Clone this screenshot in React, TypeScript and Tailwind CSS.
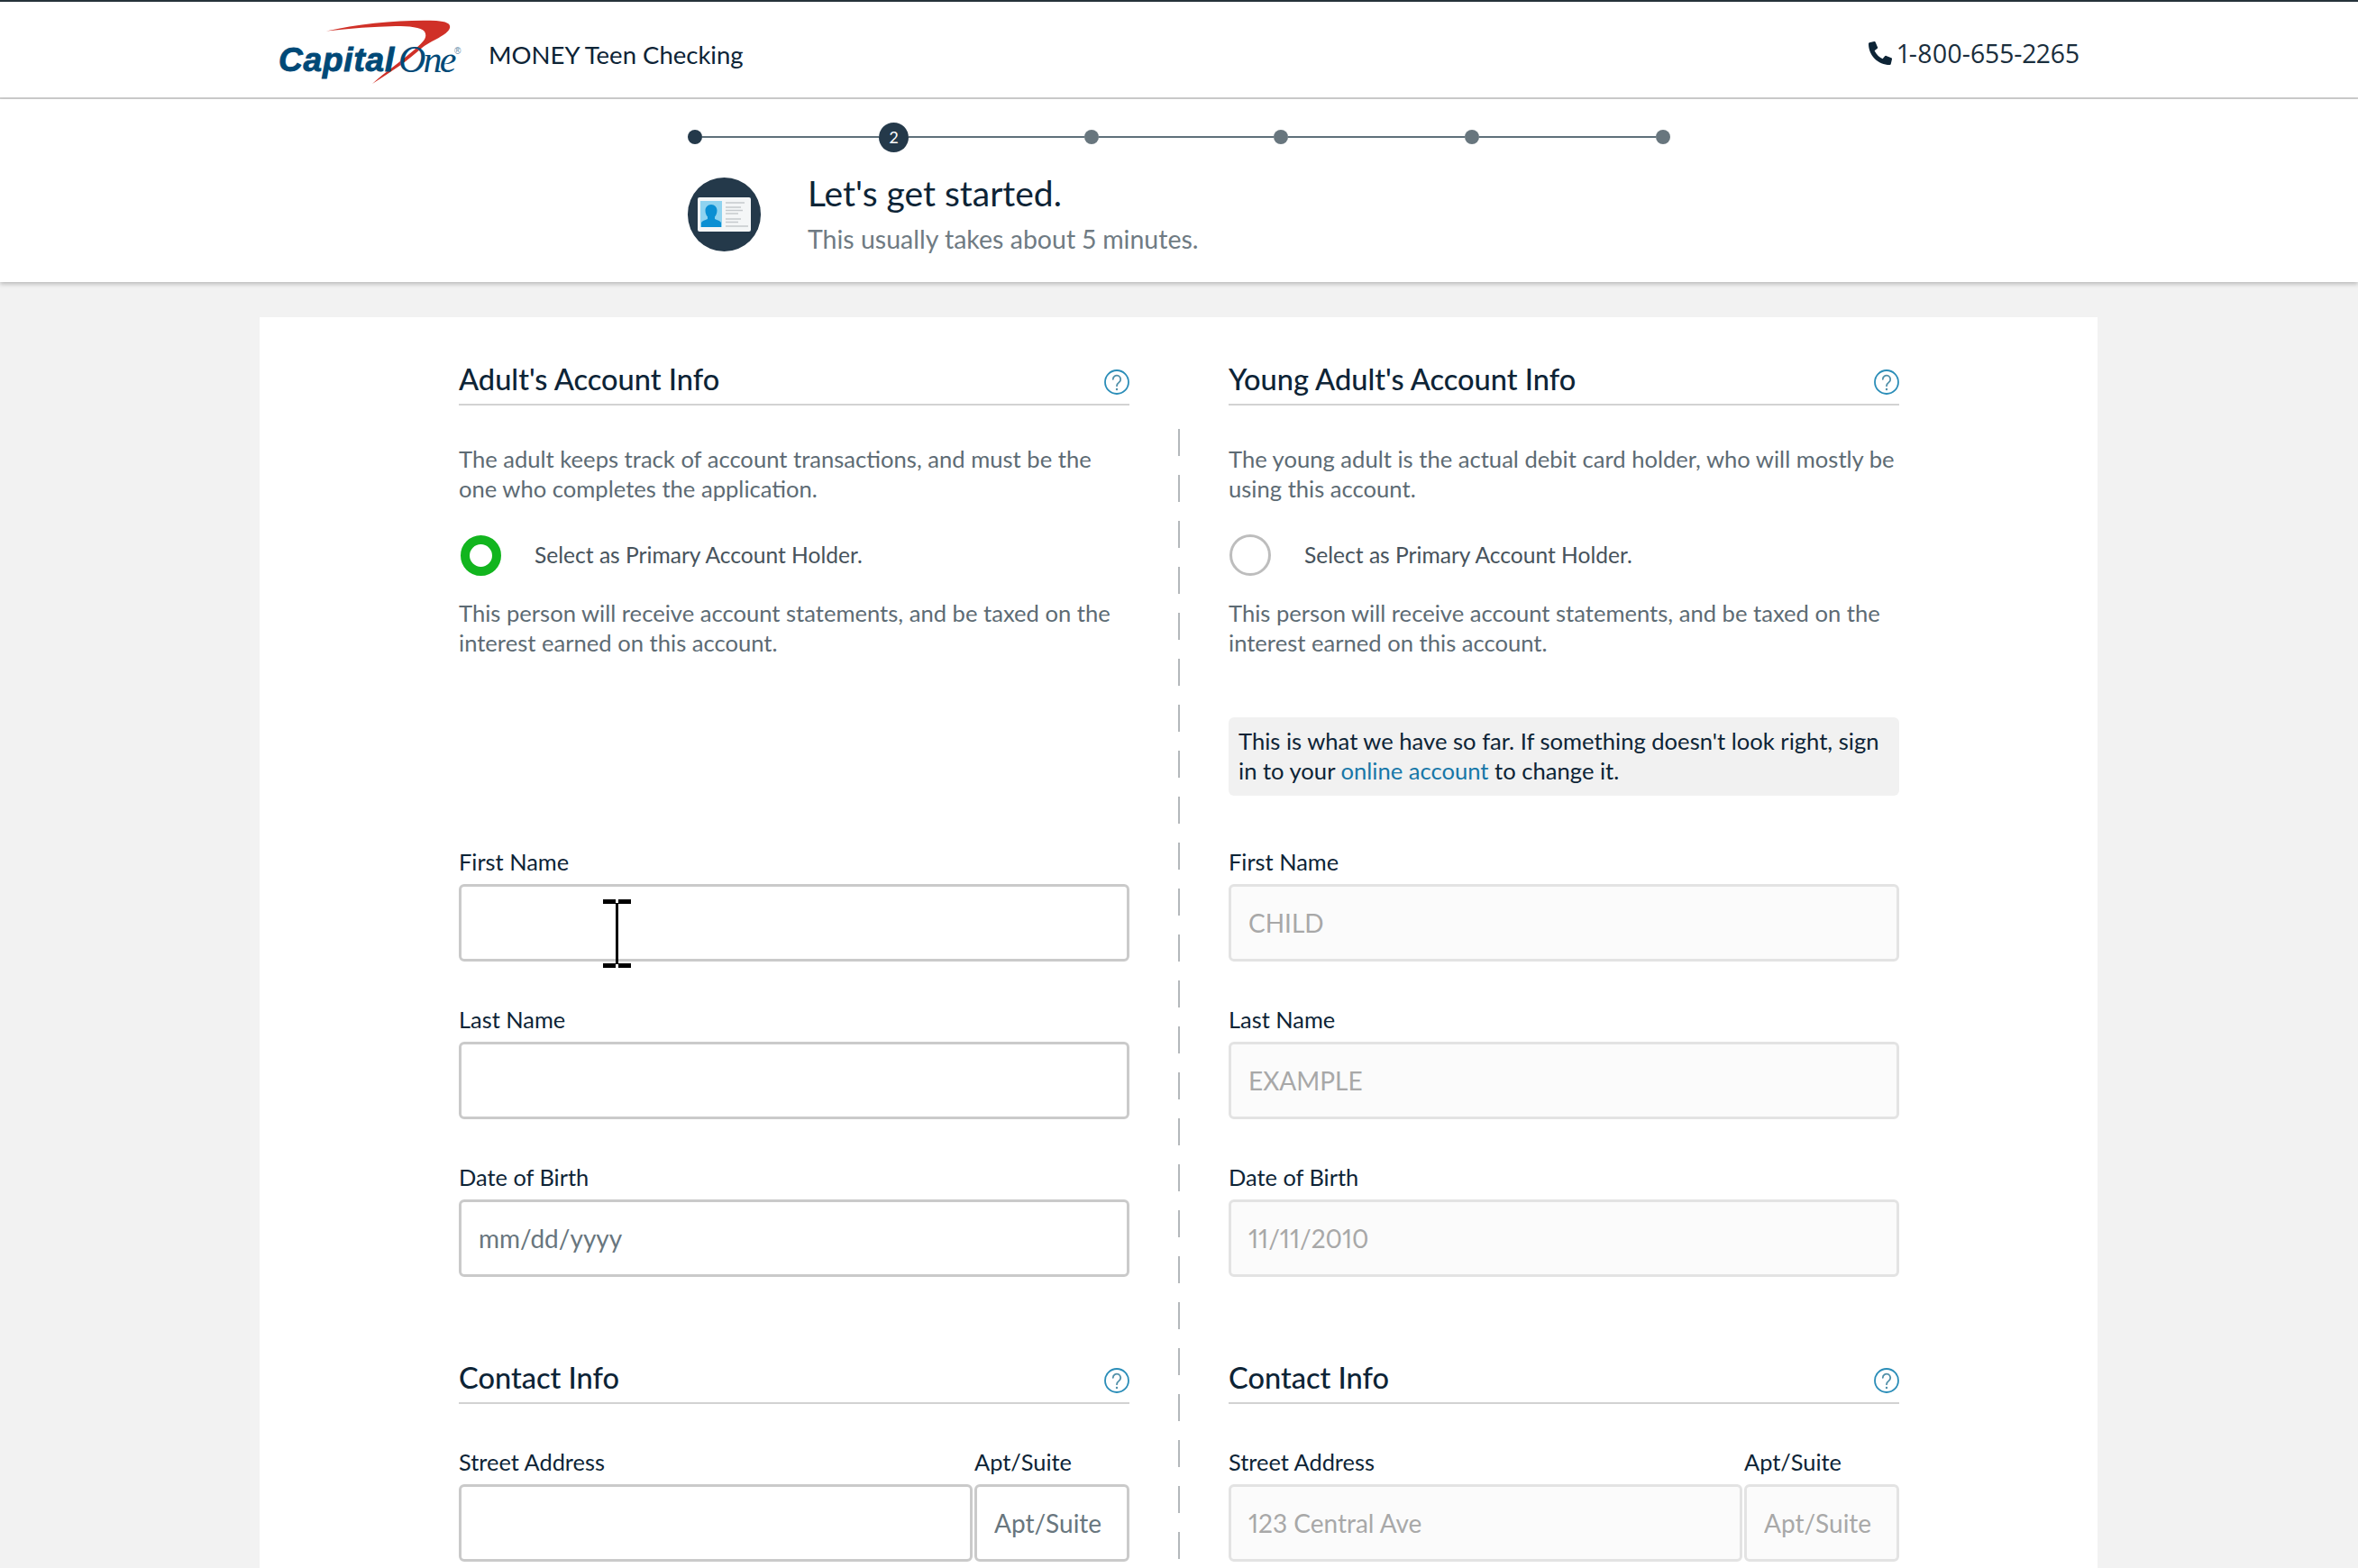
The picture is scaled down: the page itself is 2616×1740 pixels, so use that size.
import { FaPhoneAlt } from "react-icons/fa";

const steps = [
  { line: 196, size: "h-4 w-4 bg-[#24394a]" },
  { line: 195, size: "h-[33px] w-[33px] bg-[#24394a]", label: "2" },
  { line: 194, size: "h-4 w-4 bg-[#68767e]" },
  { line: 196, size: "h-4 w-4 bg-[#68767e]" },
  { line: 196, size: "h-4 w-4 bg-[#68767e]" },
  { line: 0, size: "h-4 w-4 bg-[#68767e]" },
];

function Logo() {
  return (
    <div className="relative mt-[6px] h-[72px] w-[206px] shrink-0">
      <svg viewBox="0 0 206 72" className="absolute left-0 top-0 h-[72px] w-[206px]">
        <path
          d="M53 12.500C90 4 140-0.500 175 1C188 2 191 5 190 9C187 18 170 22 158 32C145 44 125 58 104 71C118 58 135 47 151 33C160 25 166 20 162 13C158 8 145 7 130 7C105 7.500 80 9.500 53 12.500Z"
          fill="#d03027"
        />
      </svg>
      <span className="absolute left-0 top-[26px] font-['Liberation_Sans',sans-serif] text-[37px] leading-[37px] font-bold italic tracking-[0.8px] text-[#004977] [-webkit-text-stroke:0.9px_#004977]">
        Capital
      </span>
      <span className="absolute left-[133px] top-[23px] font-['Liberation_Serif',serif] text-[42px] leading-[42px] italic tracking-[-2.8px] text-[#004977]">
        One
      </span>
      <span className="absolute left-[195px] top-[30px] font-['Liberation_Sans',sans-serif] text-[10px] leading-[10px] text-[#5a87a5]">
        ®
      </span>
    </div>
  );
}

function IdCardIcon() {
  return (
    <div className="mt-[3px] flex h-[82px] w-[81px] shrink-0 items-center justify-center rounded-full bg-[#24394a]">
      <svg viewBox="0 0 59 38" className="h-[38px] w-[59px]">
        <rect width="59" height="38" rx="2" fill="#f4f6f7" />
        <rect x="3" y="4" width="24" height="29" fill="#8fd3f0" />
        <path
          d="M15 8c4 0 6.500 3 6.500 6.500 0 3-1 5.500-2.500 7v2.500c3 1.500 6 2 7 4v5H4v-5c1-2 4-2.500 7-4v-2.500c-1.500-1.500-2.500-4-2.500-7C8.500 11 11 8 15 8Z"
          fill="#0a8fd3"
        />
        <path
          d="M31 6h21M31 11h17M31 14.500h19M31 18h14M31 24h17M31 27.500h14M31 32h25"
          stroke="#c5cacd"
          strokeWidth="1.500"
        />
      </svg>
    </div>
  );
}

function HelpIcon() {
  return (
    <svg viewBox="0 0 28 28" className="h-[28px] w-[28px]" fill="none">
      <circle cx="14" cy="14" r="13" stroke="#2a8db8" strokeWidth="1.800" />
      <path
        d="M9.800 10.800a4.200 4.200 0 1 1 6.800 3.300c-1.700 1.300-2.600 2.200-2.600 4.100"
        stroke="#4f8fa8"
        strokeWidth="1.800"
        strokeLinecap="round"
      />
      <circle cx="14" cy="22" r="1.200" fill="#4f8fa8" />
    </svg>
  );
}

function SectionHeader({ title }: { title: string }) {
  return (
    <div className="flex h-[50px] items-center justify-between border-b-2 border-[#d2d2d2]">
      <h2 className="mb-[7px] text-[32.6px] leading-[40px] font-medium text-[#0d2436]">{title}</h2>
      <HelpIcon />
    </div>
  );
}

function Field({
  label,
  placeholder,
  muted,
  className,
  cursor,
}: {
  label: string;
  placeholder?: string;
  muted?: boolean;
  className?: string;
  cursor?: boolean;
}) {
  return (
    <div className={className}>
      <div className="text-[25.4px] leading-[34px] text-[#0d2436]">{label}</div>
      <div className="relative mt-[8px]">
        <input
          readOnly
          placeholder={placeholder}
          className={
            muted
              ? "h-[86px] w-full rounded-[6px] border-[3px] border-[#e3e3e3] bg-[#fbfbfb] px-[19px] text-[28px] outline-none placeholder:text-[#a8a8a8]"
              : "h-[86px] w-full rounded-[6px] border-[3px] border-[#cacaca] bg-white px-[19px] text-[28px] outline-none placeholder:text-[#68767e]"
          }
        />
        {cursor && (
          <svg viewBox="0 0 31 76" className="absolute left-[160px] top-[17px] h-[76px] w-[31px]">
            <path d="M0 0h14v5H0zM17 0h14v5H17zM0 71h14v5H0zM17 71h14v5H17zM14 4h3v68h-3z" fill="#000" />
          </svg>
        )}
      </div>
    </div>
  );
}

function AccountColumn({
  title,
  intro,
  selected,
  notice,
  values,
}: {
  title: string;
  intro: string;
  selected?: boolean;
  notice?: boolean;
  values?: { first: string; last: string; dob: string; street: string };
}) {
  const muted = !!values;
  return (
    <div className="w-[744px] shrink-0">
      <SectionHeader title={title} />
      <p className="mt-[43px] text-[25.6px] leading-[33px] text-[#5d6b74]">{intro}</p>
      <div className="mt-[35px] flex h-[44px] items-center">
        {selected ? (
          <div className="ml-[2px] h-[45px] w-[45px] rounded-full border-[10px] border-[#12b51e] bg-white" />
        ) : (
          <div className="ml-[1px] h-[46px] w-[46px] rounded-full border-[3px] border-[#bdbdbd] bg-white" />
        )}
        <span className="ml-[37px] text-[24.6px] text-[#47535c]">Select as Primary Account Holder.</span>
      </div>
      <p className="mt-[26px] text-[25.6px] leading-[33px] text-[#5d6b74]">
        This person will receive account statements, and be taxed on the interest earned on this account.
      </p>
      <div className="mt-[66px] h-[87px]">
        {notice && (
          <div className="h-full rounded-[6px] bg-[#f1f1f1] px-[11px] py-[10px] text-[25.6px] leading-[33px] text-[#0d2436]">
            This is what we have so far. If something doesn't look right, sign in to your{" "}
            <a className="text-[#1777a8]">online account</a> to change it.
          </div>
        )}
      </div>
      <Field className="mt-[56px]" label="First Name" placeholder={values?.first} muted={muted} cursor={!muted} />
      <Field className="mt-[47px]" label="Last Name" placeholder={values?.last} muted={muted} />
      <Field className="mt-[47px]" label="Date of Birth" placeholder={values?.dob ?? "mm/dd/yyyy"} muted={muted} />
      <div className="mt-[91px]">
        <SectionHeader title="Contact Info" />
      </div>
      <div className="mt-[47px] flex gap-[2px]">
        <Field className="flex-1" label="Street Address" placeholder={values?.street} muted={muted} />
        <Field className="w-[172px]" label="Apt/Suite" placeholder="Apt/Suite" muted={muted} />
      </div>
    </div>
  );
}

export default function App() {
  return (
    <div className="h-[1740px] w-[2616px] overflow-hidden bg-[#f2f2f2] font-['Lato',sans-serif] proportional-nums">
      <header className="flex h-[110px] items-center justify-between border-t-2 border-b-2 border-t-[#26323a] border-b-[#d0d0d0] bg-white pl-[309px] pr-[309px]">
        <div className="flex items-center">
          <Logo />
          <span className="ml-[27px] mt-[12px] text-[27.5px] text-[#0d2436]">MONEY Teen Checking</span>
        </div>
        <div className="mt-[8px] flex items-center font-['Open_Sans',sans-serif] text-[28.4px] text-[#1a2e3d]">
          <FaPhoneAlt className="mr-[7px] h-[26px] w-[26px] text-[#0d2436]" />
          1-800-655-2265
        </div>
      </header>

      <section className="h-[203px] bg-white pl-[763px] shadow-[0_2px_5px_rgba(0,0,0,0.25)]">
        <div className="flex h-[84px] items-center">
          {steps.map((step, i) => (
            <div key={i} className="flex items-center">
              <div className={`flex items-center justify-center rounded-full text-[18px] text-white ${step.size}`}>
                {step.label}
              </div>
              {step.line === 196 && <div className="h-[2px] w-[196px] bg-[#5f707a]" />}
              {step.line === 195 && <div className="h-[2px] w-[195px] bg-[#5f707a]" />}
              {step.line === 194 && <div className="h-[2px] w-[194px] bg-[#5f707a]" />}
            </div>
          ))}
        </div>
        <div className="flex items-start">
          <IdCardIcon />
          <div className="-mt-[4px] ml-[52px]">
            <h1 className="text-[39px] leading-[48px] font-normal text-[#0d2436]">Let's get started.</h1>
            <p className="mt-[9px] text-[28.5px] leading-[36px] text-[#6f7b83]">This usually takes about 5 minutes.</p>
          </div>
        </div>
      </section>

      <main className="ml-[288px] mt-[39px] flex h-[1500px] w-[2039px] bg-white pl-[221px] pt-[48px]">
        <AccountColumn
          title="Adult's Account Info"
          intro="The adult keeps track of account transactions, and must be the one who completes the application."
          selected
        />
        <div className="flex w-[110px] shrink-0 justify-center">
          <div className="mt-[76px] h-[1400px] w-[2px] bg-[repeating-linear-gradient(to_bottom,#b4b8bb_0,#b4b8bb_30px,transparent_30px,transparent_51px)]" />
        </div>
        <AccountColumn
          title="Young Adult's Account Info"
          intro="The young adult is the actual debit card holder, who will mostly be using this account."
          notice
          values={{ first: "CHILD", last: "EXAMPLE", dob: "11/11/2010", street: "123 Central Ave" }}
        />
      </main>
    </div>
  );
}
